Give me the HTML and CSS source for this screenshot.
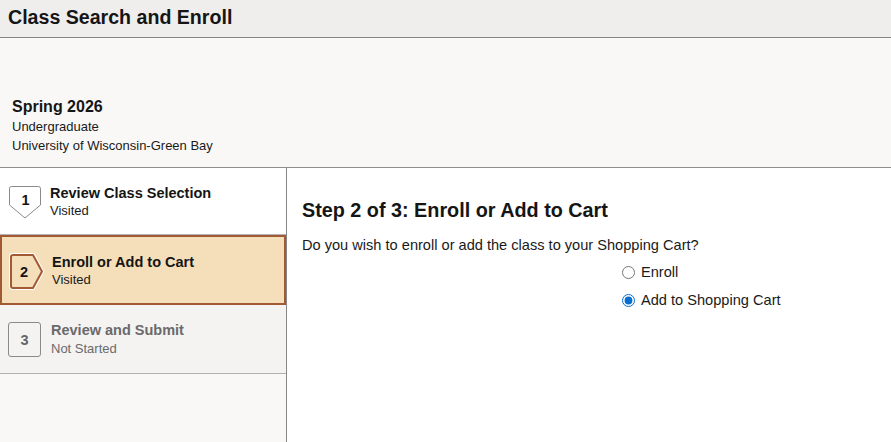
FILE: index.html
```html
<!DOCTYPE html>
<html>
<head>
<meta charset="utf-8">
<link rel="stylesheet" href="styles.css">
</head>
<body>
<header class="topbar"><h1>Class Search and Enroll</h1></header>
<section class="term">
  <div class="term-name">Spring 2026</div>
  <div class="term-sub">Undergraduate</div>
  <div class="term-sub">University of Wisconsin-Green Bay</div>
</section>
<div class="main">
  <nav class="steps">
    <div class="step visited">
      <span class="badge">
        <svg width="35" height="35" viewBox="0 0 35 35"><path d="M3.5 1.5 H30.5 Q32.5 1.5 32.5 3.5 V20 L17 33 L1.5 20 V3.5 Q1.5 1.5 3.5 1.5 Z" fill="#fff" stroke="#8a8a8a" stroke-width="1"/></svg>
        <span class="num">1</span>
      </span>
      <span class="labels"><span class="title">Review Class Selection</span><span class="status">Visited</span></span>
    </div>
    <div class="step current">
      <span class="badge">
        <svg width="35" height="39" viewBox="0 0 35 39"><path d="M4 3 H24 L33 19.5 L24 36 H4 Q2 36 2 34 V5 Q2 3 4 3 Z" fill="none" stroke="#fff" stroke-width="4" stroke-linejoin="round"/><path d="M4 3 H24 L33 19.5 L24 36 H4 Q2 36 2 34 V5 Q2 3 4 3 Z" fill="#f5deba" stroke="#a15a34" stroke-width="2" stroke-linejoin="round"/></svg>
        <span class="num">2</span>
      </span>
      <span class="labels"><span class="title">Enroll or Add to Cart</span><span class="status">Visited</span></span>
    </div>
    <div class="step notstarted">
      <span class="badge square"><span class="num">3</span></span>
      <span class="labels"><span class="title">Review and Submit</span><span class="status">Not Started</span></span>
    </div>
  </nav>
  <section class="content">
    <h2>Step 2 of 3: Enroll or Add to Cart</h2>
    <p class="question">Do you wish to enroll or add the class to your Shopping Cart?</p>
    <div class="options">
      <label class="opt"><input type="radio" name="act"> Enroll</label>
      <label class="opt"><input type="radio" name="act" checked> Add to Shopping Cart</label>
    </div>
  </section>
</div>
</body>
</html>
```
FILE: styles.css
```css
html, body { margin: 0; padding: 0; height: 100%; }
body {
  font-family: "Liberation Sans", Arial, sans-serif;
  color: #1a1a1a;
  background: #fff;
  display: flex;
  flex-direction: column;
}
.topbar {
  height: 37px;
  background: #efeeed;
  border-bottom: 1px solid #868686;
  box-sizing: content-box;
  flex-shrink: 0;
}
.topbar h1 {
  margin: 0;
  padding: 5px 0 0 8px;
  font-size: 19.6px;
  line-height: 24px;
  font-weight: bold;
  color: #151515;
}
.term {
  height: 130px;
  flex-shrink: 0;
  background: #f9f8f7;
  border-bottom: 1px solid #8e8e8e;
  box-sizing: border-box;
  display: flex;
  flex-direction: column;
  justify-content: flex-end;
  padding: 0 0 12px 12px;
}
.term-name { font-size: 16px; font-weight: bold; line-height: 20px; color: #151515; }
.term-sub { font-size: 13px; line-height: 19px; color: #1a1a1a; }
.main { flex: 1; display: flex; }
.steps {
  width: 286px;
  background: #f9f8f7;
  border-right: 1px solid #868686;
  flex-shrink: 0;
}
.step {
  display: flex;
  align-items: flex-start;
  box-sizing: border-box;
}
.step.visited {
  height: 67px;
  background: #fff;
  border-bottom: 1px solid #b5b5b5;
  padding: 17px 0 0 8px;
}
.step.current {
  height: 70px;
  background: #f5deba;
  border: 2px solid #a15a34;
  padding: 15px 0 0 8px;
}
.step.notstarted {
  height: 69px;
  background: #f4f3f2;
  border-bottom: 1px solid #b0b0b0;
  padding: 17px 0 0 8px;
}
.badge {
  position: relative;
  width: 35px;
  height: 35px;
  flex-shrink: 0;
  display: flex;
  align-items: center;
  justify-content: center;
}
.badge svg { position: absolute; left: 0; top: 0; }
.step.visited .num { margin-top: -5px; }
.step.visited .labels { margin-top: -1px; }
.step.current .badge { height: 39px; margin-left: -1px; }
.step.current .num { margin-left: -5px; }
.badge .num {
  position: relative;
  font-size: 14.5px;
  font-weight: bold;
  color: #151515;
}
.badge.square {
  width: 33px;
  height: 35px;
  border: 1px solid #8a8a8a;
  border-radius: 3px;
  box-sizing: border-box;
  background: #f4f3f2;
}
.badge.square .num { color: #666; }
.labels { display: flex; flex-direction: column; margin-left: 7px; }
.step.current .labels { margin-left: 8px; margin-top: 1px; }
.step.notstarted .labels { margin-left: 10px; margin-top: -1px; }
.title { font-size: 14.5px; font-weight: bold; line-height: 18px; color: #151515; }
.status { font-size: 13px; line-height: 17px; color: #1a1a1a; }
.notstarted .title { color: #6a6a6a; }
.notstarted .status { color: #6a6a6a; line-height: 19px; }
.content { flex: 1; padding: 0 0 0 15px; background: #fff; }
.content h2 {
  margin: 30px 0 0 0;
  font-size: 19.8px;
  line-height: 24px;
  font-weight: bold;
  color: #151515;
}
.question { margin: 14px 0 0 0; font-size: 14.6px; line-height: 18px; color: #1a1a1a; }
.options {
  display: flex;
  flex-direction: column;
  margin-left: 320px;
  margin-top: 9px;
  gap: 9px;
}
.opt {
  display: flex;
  align-items: center;
  font-size: 14.6px;
  line-height: 19px;
  color: #1a1a1a;
}
.opt input { margin: 0 6px 0 0; width: 13px; height: 13px; accent-color: #0a6ed1; }
```
